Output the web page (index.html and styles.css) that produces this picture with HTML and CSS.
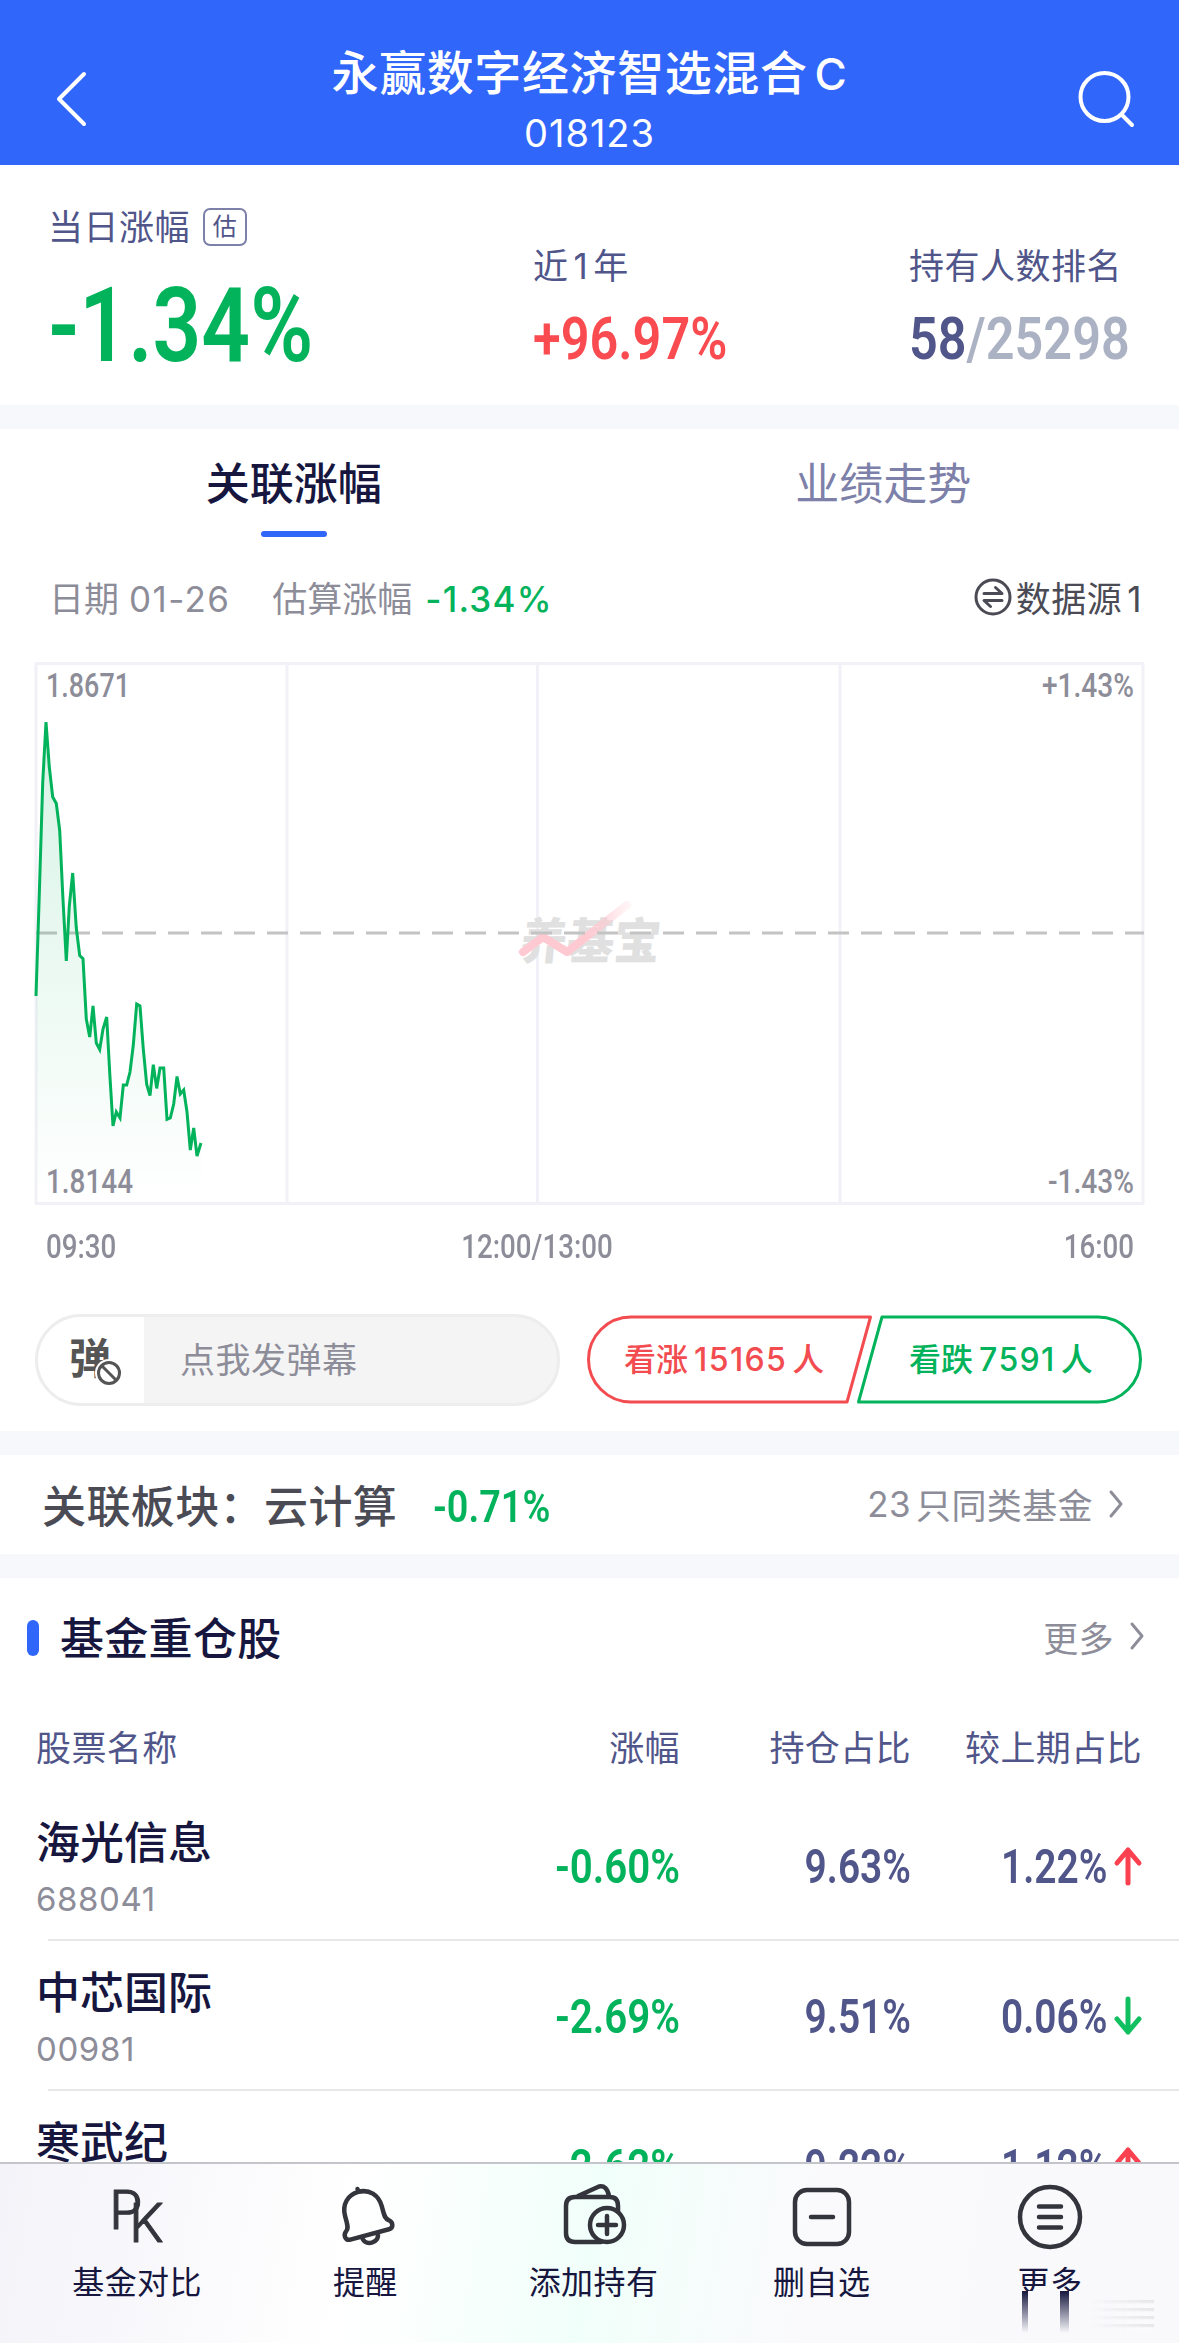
FILE: index.html
```html
<!DOCTYPE html>
<html lang="zh-CN">
<head>
    <meta charset="UTF-8">
    <meta name="viewport" content="width=device-width, initial-scale=1.0">
    <title>永赢数字经济智选混合C</title>
    <link rel="stylesheet" href="styles.css">
</head>
<body>
    <header class="top-bar">
        <svg class="back" width="32" height="56" viewBox="0 0 32 56"><path d="M30 3 L5 28 L30 53"/></svg>
        <div class="fund">
            <h1>永赢数字经济智选混合<span class="latin">C</span></h1>
            <p>018123</p>
        </div>
        <svg class="search" width="58" height="58" viewBox="0 0 58 58"><circle cx="26.5" cy="26" r="24"/><path d="M44 44 L54 54"/></svg>
    </header>

    <section class="summary">
        <div class="today">
            <p class="label">当日涨幅<span class="badge">估</span></p>
            <p class="big"><span class="din green">-1.34%</span></p>
        </div>
        <div class="year">
            <p class="label">近<span class="latin">1</span>年</p>
            <p class="mid"><span class="din red">+96.97%</span></p>
        </div>
        <div class="rank">
            <p class="label">持有人数排名</p>
            <p class="mid"><span class="din navy">58<span class="muted">/25298</span></span></p>
        </div>
    </section>

    <section class="trend">
        <nav class="tabs">
            <a class="tab active">关联涨幅</a>
            <a class="tab">业绩走势</a>
        </nav>
        <div class="meta">
            <span>日期</span>
            <span class="date">01-26</span>
            <span>估算涨幅</span>
            <span class="rate green">-1.34%</span>
            <span class="source">
                <svg width="38" height="38" viewBox="0 0 38 38"><circle cx="19" cy="19" r="17"/><path d="M10 15.500 H28 L21.500 9.500 M28 22.500 H10 L16.500 28.500"/></svg>
                数据源<span class="latin">1</span>
            </span>
        </div>

        <div class="chart">
            <svg width="1111" height="544" viewBox="0 0 1111 544">
                <defs>
                    <linearGradient id="area" x1="0" y1="0" x2="0" y2="1">
                        <stop offset="0" stop-color="#03b35c" stop-opacity="0.16"/>
                        <stop offset="1" stop-color="#03b35c" stop-opacity="0"/>
                    </linearGradient>
                    <linearGradient id="mark" x1="0" y1="0" x2="1" y2="0">
                        <stop offset="0.6" stop-color="#ffc9d1"/>
                        <stop offset="1" stop-color="#ffc9d1" stop-opacity="0.2"/>
                    </linearGradient>
                </defs>
                <path class="grid" d="M1 1.500 H1108 V541.500 H1 Z M252 1 V541 M502.500 1 V541 M805 1 V541"/>
                <g class="watermark">
                    <text transform="translate(484 297) skewX(-6)" textLength="140" lengthAdjust="spacingAndGlyphs">养基宝</text>
                    <path stroke="url(#mark)" d="M488 290 L508 275 L532 290 L592 243"/>
                </g>
                <path class="base" d="M1 271 H1109"/>
                <path fill="url(#area)" d="M1 541 V334 L4.300 232 L7.700 121 L11 60 L14.300 105 L17.700 135 L21.300 141.500 L24.700 168.500 L27.700 232 L31.300 299 L34.300 244 L37.700 211 L41.300 266 L44.700 293.500 L48 296.700 L51.300 357 L54.700 375 L58 344 L61.300 381 L64.700 387.500 L68 367 L71.700 355 L74.700 410.500 L78 464 L81.300 450 L85 456 L88.300 423 L91.700 423 L95 410 L98.300 383 L101.700 342 L105 344 L108.300 387 L111.700 422.500 L115 433.500 L118.300 402.600 L121.700 426.400 L125 406 L128.700 406 L132 457.400 L135.300 456 L138.700 442 L142 414.500 L145.300 432 L148.700 428 L152 450 L155.300 488 L158.700 466 L162 494 L166 481 V541 Z"/>
                <polyline class="line" points="1,334 4.300,232 7.700,121 11,60 14.300,105 17.700,135 21.300,141.500 24.700,168.500 27.700,232 31.300,299 34.300,244 37.700,211 41.300,266 44.700,293.500 48,296.700 51.300,357 54.700,375 58,344 61.300,381 64.700,387.500 68,367 71.700,355 74.700,410.500 78,464 81.300,450 85,456 88.300,423 91.700,423 95,410 98.300,383 101.700,342 105,344 108.300,387 111.700,422.500 115,433.500 118.300,402.600 121.700,426.400 125,406 128.700,406 132,457.400 135.300,456 138.700,442 142,414.500 145.300,432 148.700,428 152,450 155.300,488 158.700,466 162,494 166,481"/>
                <g class="axis">
                    <text x="11" y="35" textLength="84" lengthAdjust="spacingAndGlyphs">1.8671</text>
                    <text x="11" y="531" textLength="87" lengthAdjust="spacingAndGlyphs">1.8144</text>
                    <text x="1007" y="35" textLength="92" lengthAdjust="spacingAndGlyphs">+1.43%</text>
                    <text x="1013" y="531" textLength="86" lengthAdjust="spacingAndGlyphs">-1.43%</text>
                </g>
            </svg>
            <div class="times">
                <span class="din">09:30</span>
                <span class="din center">12:00/13:00</span>
                <span class="din right">16:00</span>
            </div>
        </div>

        <div class="actions">
            <div class="danmu">
                <div class="toggle">弹<svg width="28" height="28" viewBox="0 0 28 28"><circle cx="14" cy="14" r="10.500"/><path d="M7 7 L21 21"/></svg></div>
                <div class="placeholder">点我发弹幕</div>
            </div>
            <div class="votes">
                <svg width="558" height="90" viewBox="0 0 558 90">
                    <path stroke="#f24c50" d="M45 2 H284.500 L261 87 H45 A42.500 42.500 0 0 1 45 2 Z"/>
                    <path stroke="#03b35c" d="M296 2 H512 A42.500 42.500 0 0 1 512 87 H272.500 Z"/>
                </svg>
                <span class="up">看涨<b>15165</b>人</span>
                <span class="down">看跌<b>7591</b>人</span>
            </div>
        </div>
    </section>

    <section class="sector">
        <span class="sector-name">关联板块：云计算</span>
        <span class="din green">-0.71%</span>
        <span class="link"><span class="latin">23</span>只同类基金<svg width="16" height="32" viewBox="0 0 16 32"><path d="M3 4 L13 16 L3 28"/></svg></span>
    </section>

    <section class="holdings">
        <div class="title">
            <h2>基金重仓股</h2>
            <span class="link">更多<svg width="16" height="32" viewBox="0 0 16 32"><path d="M3 4 L13 16 L3 28"/></svg></span>
        </div>
        <div class="row head">
            <span>股票名称</span><span>涨幅</span><span>持仓占比</span><span>较上期占比</span>
        </div>
        <div class="row">
            <div class="stock"><h3>海光信息</h3><p>688041</p></div>
            <span class="din green">-0.60%</span>
            <span class="din">9.63%</span>
            <span class="change"><span class="din">1.22%</span><svg class="rise" width="28" height="40" viewBox="0 0 28 40"><path d="M14 37 V4 M3 17 L14 4 L25 17"/></svg></span>
        </div>
        <div class="row">
            <div class="stock"><h3>中芯国际</h3><p>00981</p></div>
            <span class="din green">-2.69%</span>
            <span class="din">9.51%</span>
            <span class="change"><span class="din">0.06%</span><svg class="fall" width="28" height="40" viewBox="0 0 28 40"><path d="M14 3 V36 M3 23 L14 36 L25 23"/></svg></span>
        </div>
        <div class="row">
            <div class="stock"><h3>寒武纪</h3><p>&nbsp;</p></div>
            <span class="din green">-2.62%</span>
            <span class="din">9.22%</span>
            <span class="change"><span class="din">1.12%</span><svg class="rise" width="28" height="40" viewBox="0 0 28 40"><path d="M14 37 V4 M3 17 L14 4 L25 17"/></svg></span>
        </div>
    </section>

    <footer class="bottom-bar">
        <a class="item">
            <svg width="70" height="70" viewBox="0 0 70 70"><g class="pk"><text x="7" y="47">P</text><text x="27" y="60">K</text></g></svg>
            基金对比
        </a>
        <a class="item">
            <svg width="70" height="70" viewBox="0 0 70 70"><g transform="rotate(-15 35 35)"><path d="M35 9 V6 M15 53 C10 53 9 47 13 44 C16 42 16 39 16 34 V29 C16 17 24 9 35 9 C46 9 54 17 54 29 V34 C54 39 54 42 57 44 C61 47 60 53 55 53 Z M27 54 C27 64 43 64 43 54"/></g></svg>
            提醒
        </a>
        <a class="item">
            <svg width="70" height="70" viewBox="0 0 70 70"><path d="M59 29 V24 Q59 15 51 15 H16 Q7 15 7 24 V51 Q7 60 16 60 H42 M19 14 L40 4.500 Q48 3 50 14"/><circle cx="48" cy="43" r="17"/><path d="M48 34 V52 M39 43 H57"/></svg>
            添加持有
        </a>
        <a class="item">
            <svg width="70" height="70" viewBox="0 0 70 70"><rect x="8" y="8" width="54" height="54" rx="12"/><path d="M24 35 H46"/></svg>
            删自选
        </a>
        <a class="item more">
            <svg width="70" height="70" viewBox="0 0 70 70"><circle cx="35" cy="35" r="30"/><path d="M24 24.500 H46 M24 35 H46 M24 45.500 H46"/></svg>
            更多
            <span class="smear"></span>
            <span class="streaks"></span>
        </a>
    </footer>
</body>
</html>
```
FILE: styles.css
```css
* {
    box-sizing: border-box;
    margin: 0;
    padding: 0;
}
body {
    width: 1179px;
    height: 2343px;
    overflow: hidden;
    position: relative;
    background: #f6f8fb;
    font-family: Inter, "Noto Sans CJK SC", sans-serif;
    color: #16163f;
}
svg {
    display: block;
    fill: none;
    overflow: visible;
    stroke-linecap: round;
    stroke-linejoin: round;
}
section {
    background: #fff;
}
.din {
    display: inline-block;
    font-family: Roboto, sans-serif;
    font-weight: 600;
    transform: scaleX(0.84);
    transform-origin: left center;
}
.green {
    color: #03b35c;
}
.red {
    color: #f94b50;
}
.navy {
    color: #50558a;
}
.muted {
    color: #abb2c3;
}
.latin {
    margin: 0 5px;
}

/* header */
.top-bar {
    display: flex;
    justify-content: space-between;
    height: 165px;
    padding: 0 43px 0 54px;
    background: #3066fa;
    color: #fff;
}
.top-bar svg {
    stroke: #fff;
    stroke-width: 4;
}
.back {
    margin-top: 71px;
}
.search {
    margin-top: 71px;
}
.fund {
    text-align: center;
    padding: 42px 0 0 15px;
}
.fund h1 {
    font-size: 47px;
    line-height: 62px;
    font-weight: 500;
    letter-spacing: 0.6px;
}
.fund .latin {
    margin: 0 0 0 7px;
    font-size: 44px;
}
.fund p {
    font-size: 38px;
    line-height: 56px;
    letter-spacing: 1px;
}

/* summary */
.summary {
    display: flex;
    height: 240px;
    padding-left: 48px;
    color: #50558a;
}
.label {
    display: flex;
    align-items: center;
    font-size: 35px;
    line-height: 52px;
    letter-spacing: 0.5px;
}
.badge {
    width: 44px;
    height: 38px;
    margin-left: 13px;
    border: 2px solid #7d80a8;
    border-radius: 7px;
    font-size: 24px;
    line-height: 33px;
    text-align: center;
}
.today {
    width: 485px;
    padding-top: 36px;
}
.year {
    width: 376px;
    padding-top: 75px;
}
.rank {
    padding-top: 75px;
}
.big {
    font-size: 103px;
    line-height: 120px;
    margin-top: 11px;
}
.big .din {
    transform: scaleX(0.83);
}
.mid {
    font-size: 60px;
    line-height: 72px;
    margin-top: 9px;
}

/* trend */
.trend {
    height: 1002px;
    margin-top: 24px;
}
.tabs {
    display: flex;
    height: 110px;
}
.tab {
    flex: 1;
    display: flex;
    flex-direction: column;
    align-items: center;
    font-size: 44px;
    line-height: 60px;
    padding: 25px 2px 0 0;
    color: #7d80a8;
}
.tab.active {
    color: #16163f;
    font-weight: 500;
}
.tab.active::after {
    content: "";
    width: 66px;
    height: 6px;
    margin-top: 17px;
    border-radius: 3px;
    background: #3066fa;
}
.meta {
    display: flex;
    height: 123px;
    padding: 34px 32px 0 49px;
    font-size: 35px;
    line-height: 52px;
    color: #8d8d99;
}
.date {
    margin: 0 42px 0 10px;
    letter-spacing: 1.4px;
}
.rate {
    margin-left: 13px;
    font-weight: 500;
    letter-spacing: 1.2px;
}
.source {
    display: flex;
    margin-left: auto;
    color: #4b4b55;
    letter-spacing: 0.5px;
}
.source svg {
    margin: 5px 4px 0 0;
    stroke: #4b4b55;
    stroke-width: 3;
}
.chart {
    height: 645px;
    padding-left: 35px;
}
.grid {
    stroke: #f1f1f7;
    stroke-width: 3;
}
.base {
    stroke: #c3c3c3;
    stroke-width: 3;
    stroke-linecap: butt;
    stroke-dasharray: 21 12;
}
.line {
    stroke: #03b35c;
    stroke-width: 3;
    stroke-linejoin: miter;
    stroke-linecap: butt;
}
.axis text {
    font: 500 33px Roboto, sans-serif;
    fill: #8d8d99;
}
.watermark text {
    font: 900 49px "Noto Sans CJK SC", sans-serif;
    fill: #e0e0e0;
}
.watermark path {
    stroke-width: 8;
}
.times {
    display: grid;
    grid-template-columns: 399px 184px 1fr;
    padding: 19px 45px 0 11px;
    font-size: 33px;
    line-height: 44px;
    color: #8d8d99;
}
.times .din {
    font-weight: 500;
}
.times .center {
    text-align: center;
    transform-origin: center;
}
.times .right {
    text-align: right;
    transform-origin: right center;
}

/* danmu and votes */
.actions {
    display: flex;
    padding: 7px 35px 0;
}
.danmu {
    display: flex;
    width: 525px;
    height: 92px;
    border: 3px solid #ededed;
    border-radius: 46px;
    overflow: hidden;
    background: #f4f4f4;
}
.toggle {
    display: flex;
    width: 106px;
    padding-left: 31px;
    background: #fff;
    color: #555;
    font-size: 42px;
    font-weight: 700;
    line-height: 84px;
}
.toggle svg {
    flex: none;
    margin: 42px 0 0 -16px;
    background: #fff;
    border-radius: 50%;
    stroke: #555;
    stroke-width: 3;
}
.placeholder {
    padding-left: 36px;
    font-size: 35px;
    line-height: 86px;
    letter-spacing: 0.5px;
    color: #8d8d99;
}
.votes {
    display: grid;
    margin: 1px 0 0 26px;
    font-size: 32px;
    font-weight: 500;
    line-height: 89px;
}
.votes > * {
    grid-area: 1 / 1;
}
.votes svg {
    stroke-width: 3;
}
.votes b {
    margin: 0 5px 0 6px;
    font-weight: 500;
    letter-spacing: 1.4px;
}
.up {
    padding-left: 38px;
    color: #f24c50;
}
.down {
    padding-left: 323px;
    color: #03b35c;
}

/* sector */
.sector {
    display: flex;
    align-items: center;
    height: 99px;
    margin-top: 24px;
    padding: 0 55px 2px 42px;
    font-size: 44px;
    color: #4b4b55;
}
.sector .din {
    margin: 5px 0 0 36px;
    font-size: 45px;
}
.sector-name {
    font-weight: 500;
    letter-spacing: 0.4px;
}
.link {
    display: flex;
    align-items: center;
    margin-left: auto;
    font-size: 35px;
    letter-spacing: 0.4px;
    color: #8d8d99;
}
.link svg {
    margin-left: 15px;
    stroke: #8d8d99;
    stroke-width: 3;
}

/* holdings */
.holdings {
    margin-top: 24px;
    height: 765px;
}
.title {
    display: flex;
    align-items: center;
    height: 118px;
    padding: 0 34px 2px 27px;
}
.title h2 {
    display: flex;
    align-items: center;
    font-size: 44px;
    font-weight: 500;
    letter-spacing: 0.3px;
}
.title h2::before {
    content: "";
    width: 12px;
    height: 36px;
    margin: 4px 21px 0 0;
    border-radius: 6px;
    background: #3066fa;
}
.row {
    display: grid;
    grid-template-columns: 440px 204px 231px 231px;
    height: 150px;
    padding-left: 36px;
    font-size: 48px;
    color: #50558a;
    align-items: center;
    background: linear-gradient(#e8e8ea, #e8e8ea) 48px 100% / 100% 2px no-repeat;
}
.row > * {
    text-align: right;
}
.row .din {
    transform: scaleX(0.81);
    transform-origin: right center;
}
.row .green {
    transform: scaleX(0.84);
}
.row.head {
    height: 95px;
    padding-top: 3px;
    font-size: 35px;
    letter-spacing: 0.4px;
    background: none;
}
.row .stock,
.row.head > :first-child {
    text-align: left;
}
.stock {
    padding-top: 4px;
}
.stock h3 {
    font-size: 44px;
    line-height: 62px;
    font-weight: 500;
    color: #16163f;
}
.stock p {
    font-size: 33px;
    line-height: 50px;
    letter-spacing: 0.6px;
    color: #8d8d99;
}
.change {
    display: flex;
    justify-content: flex-end;
    align-items: center;
}
.change svg {
    margin-left: 7px;
    stroke-width: 5;
}
.rise {
    stroke: #fb4050;
}
.fall {
    stroke: #10c060;
}

/* bottom bar */
.bottom-bar {
    position: absolute;
    left: 0;
    bottom: 0;
    display: flex;
    width: 100%;
    height: 181px;
    padding: 18px 15px 0 23px;
    border-top: 2px solid #c3c5ca;
    background: linear-gradient(100deg, #f3f3f9, #fff 30%, #f1fffa 50%, #fafafc 68%, #f9f9fc);
}
.item {
    position: relative;
    flex: 1;
    display: flex;
    flex-direction: column;
    align-items: center;
    font-size: 32px;
    line-height: 58px;
    letter-spacing: 0.4px;
}
.item svg {
    margin-bottom: 2px;
    stroke: #33343c;
    stroke-width: 4.5;
}
.pk {
    font: 300 54px Inter, sans-serif;
    fill: #33343c;
    stroke-width: 1;
}
.smear {
    position: absolute;
    left: 80px;
    top: 109px;
    width: 72px;
    height: 42px;
    background:
        linear-gradient(#16163f, #16163f00) 6px 0 / 6px 42px no-repeat,
        linear-gradient(#16163f, #16163f00) 44px 0 / 9px 42px no-repeat,
        #f9f9fc;
}
.streaks {
    position: absolute;
    left: 152px;
    top: 118px;
    width: 66px;
    height: 32px;
    background: repeating-linear-gradient(#e6e6e9 0 2px, #fafafc 4px 8px);
    -webkit-mask-image: linear-gradient(90deg, transparent, #000);
    mask-image: linear-gradient(90deg, transparent, #000);
}
```
